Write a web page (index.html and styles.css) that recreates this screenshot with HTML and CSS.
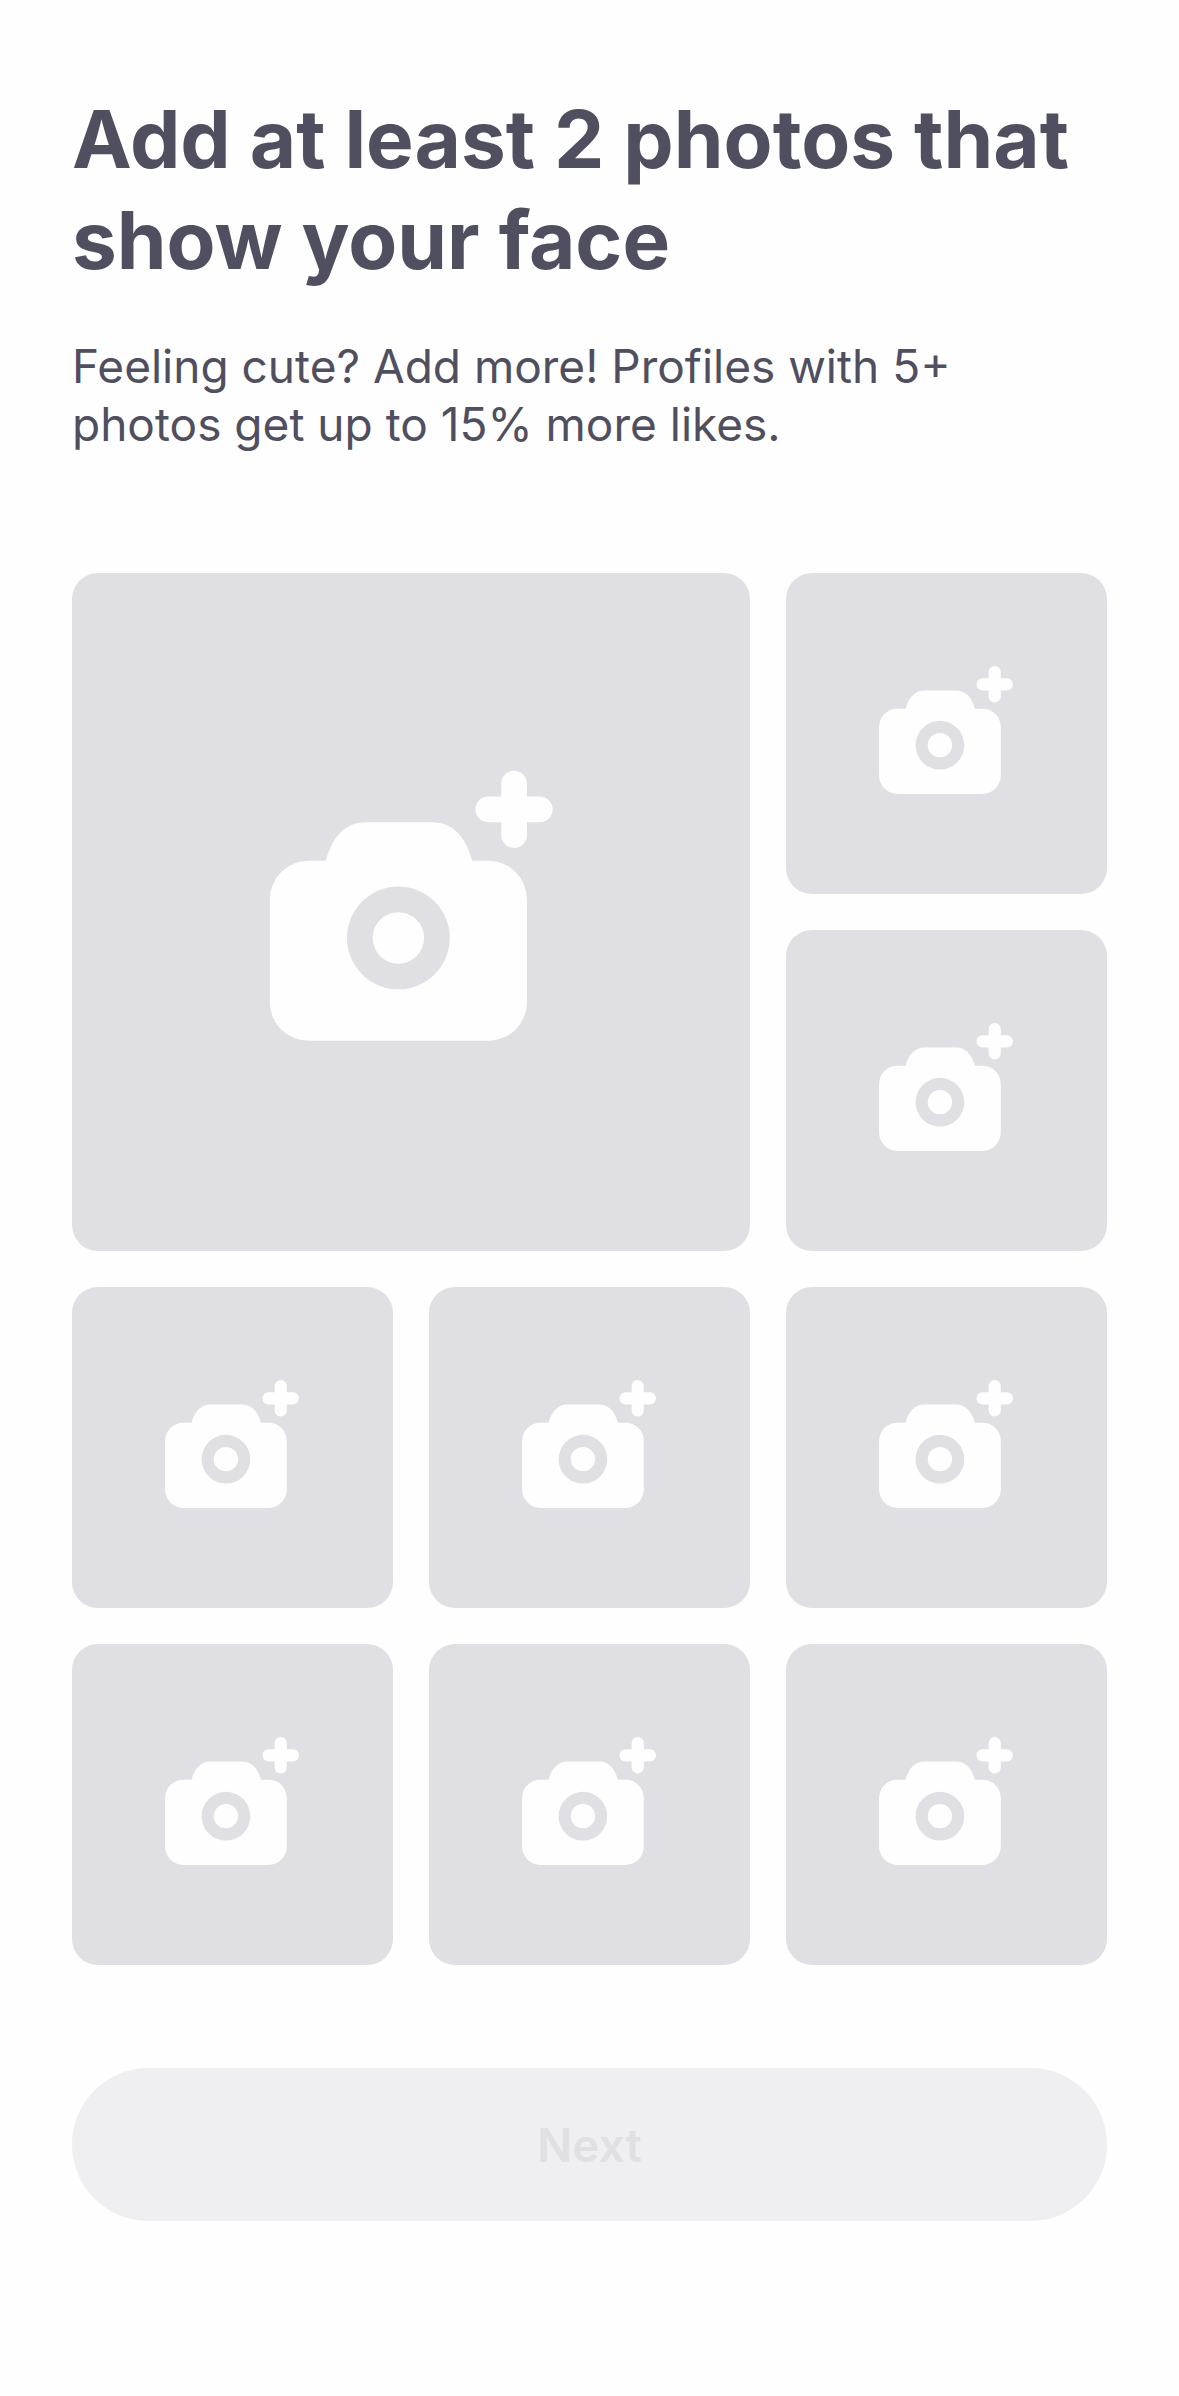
FILE: index.html
```html
<!DOCTYPE html>
<html lang="en">
<head>
    <meta charset="UTF-8">
    <meta name="viewport" content="width=device-width, initial-scale=1">
    <title>Add photos</title>
    <link rel="stylesheet" href="styles.css">
</head>
<body>
    <svg class="sprite" aria-hidden="true">
        <symbol id="camera" viewBox="0 0 24 24">
            <path fill-rule="evenodd" d="M4 8h1.35C5.85 6.2 6.8 5 8.5 5h5.1c1.7 0 2.65 1.2 3.15 3H18a3 3 0 0 1 3 3v8a3 3 0 0 1-3 3H4a3 3 0 0 1-3-3v-8a3 3 0 0 1 3-3zM11 10a4 4 0 1 0 0 8a4 4 0 1 0 0-8z"/>
            <circle cx="11" cy="14" r="2"/>
            <path d="M19 2a1 1 0 0 1 2 0v1h1a1 1 0 0 1 0 2h-1v1a1 1 0 0 1-2 0V5h-1a1 1 0 0 1 0-2h1z"/>
        </symbol>
    </svg>

    <main class="page">
        <h1 class="title">Add at least 2 photos that show your face</h1>
        <p class="subtitle">Feeling cute? Add more! Profiles with 5+<br>photos get up to 15% more likes.</p>

        <div class="photos">
            <button class="photo main" aria-label="Add main photo"><svg><use href="#camera"/></svg></button>
            <button class="photo" aria-label="Add photo 2"><svg><use href="#camera"/></svg></button>
            <button class="photo" aria-label="Add photo 3"><svg><use href="#camera"/></svg></button>
            <button class="photo" aria-label="Add photo 4"><svg><use href="#camera"/></svg></button>
            <button class="photo" aria-label="Add photo 5"><svg><use href="#camera"/></svg></button>
            <button class="photo" aria-label="Add photo 6"><svg><use href="#camera"/></svg></button>
            <button class="photo" aria-label="Add photo 7"><svg><use href="#camera"/></svg></button>
            <button class="photo" aria-label="Add photo 8"><svg><use href="#camera"/></svg></button>
            <button class="photo" aria-label="Add photo 9"><svg><use href="#camera"/></svg></button>
        </div>

        <button class="next" disabled>Next</button>
    </main>
</body>
</html>
```
FILE: styles.css
```css
* {
    box-sizing: border-box;
}
body {
    margin: 0;
    background: #fefefe;
    color: #504f5f;
    font-family: Inter, "Liberation Sans", sans-serif;
}
.sprite {
    display: none;
}
.page {
    padding: 88px 72px 174px;
}
.title {
    margin: 0;
    font-size: 80px;
    line-height: 101px;
    font-weight: 700;
}
.subtitle {
    margin: 47px 0 0;
    font-size: 46px;
    line-height: 58px;
}
.photos {
    display: grid;
    grid-template-columns: repeat(3, 1fr);
    gap: 36px;
    margin-top: 120px;
}
.photo {
    display: flex;
    align-items: center;
    justify-content: center;
    aspect-ratio: 1;
    padding: 0;
    border: none;
    border-radius: 26px;
    background: #e0dfe4;
    cursor: pointer;
}
.photo.main {
    grid-column: span 2;
    grid-row: span 2;
}
.photo svg {
    width: 45.5%;
    aspect-ratio: 1;
    fill: #fefefe;
}
.next {
    display: block;
    width: 100%;
    height: 153px;
    margin-top: 103px;
    border: none;
    border-radius: 77px;
    background: #efeff1;
    color: #e0e0e2;
    font-family: inherit;
    font-size: 46px;
    font-weight: 600;
}
```
